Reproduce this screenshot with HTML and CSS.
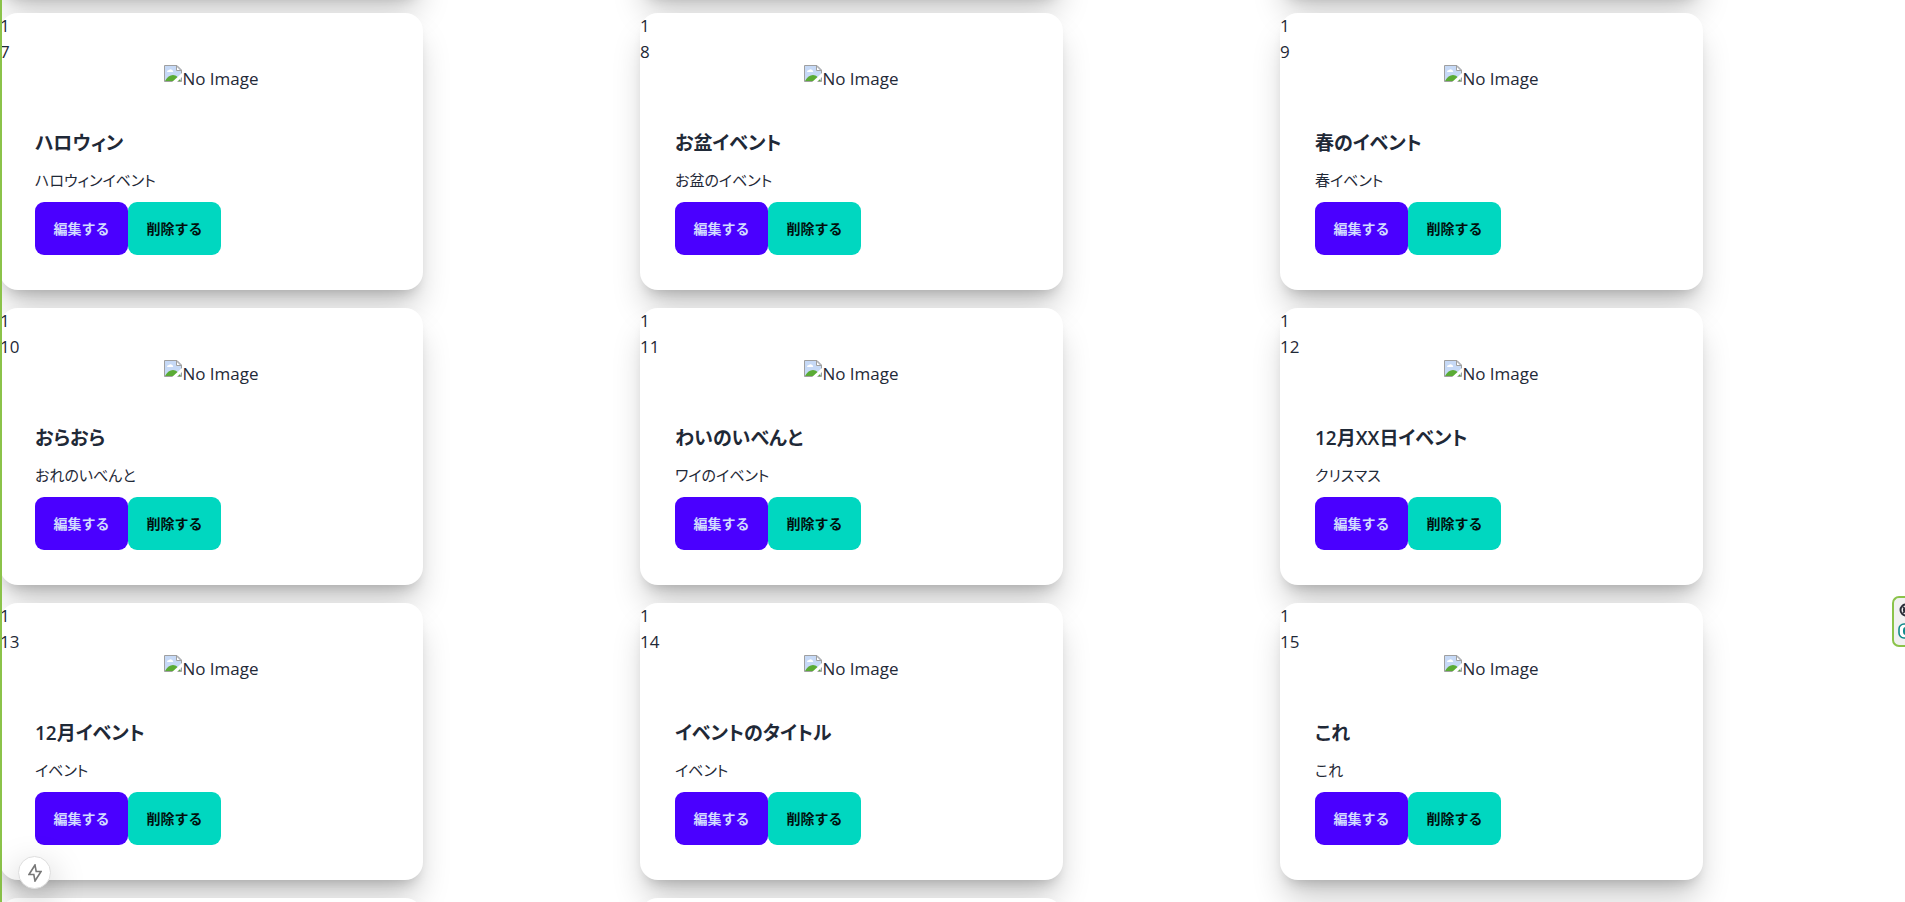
FILE: index.html
```html
<!DOCTYPE html>
<html lang="ja">
<head>
<meta charset="utf-8">
<meta name="viewport" content="width=device-width, initial-scale=1">
<title>イベント</title>
<link rel="stylesheet" href="styles.css">
</head>
<body>
<svg width="0" height="0" class="defs" aria-hidden="true">
  <symbol id="broken" viewBox="0 0 18 18">
    <path d="M.5 16.500V.5H13L17.500 5v11.500z" fill="#c6d9f6" stroke="#a0a0a0"/>
    <path d="M12.500 1v4.500H17z" fill="#fff" stroke="#a0a0a0"/>
    <path d="M3 7a2 2 0 0 1 2-2 2.500 2.500 0 0 1 4 1 1 1 0 0 1 0 1z" fill="#fff"/>
    <path d="M1 16c2-4 5-6 8-6 3 0 6 3 8 6z" fill="#5aab35"/>
    <path d="M7 18 18 8v4l-6 6z" fill="#fff"/>
  </symbol>
</svg>
<main class="page">
  <div class="grid">
    <article class="card"></article>
    <article class="card"></article>
    <article class="card"></article>

    <article class="card">
      <div class="num">1</div><div class="num">7</div>
      <figure class="figure"><svg class="broken"><use href="#broken"/></svg><span>No Image</span></figure>
      <div class="body"><h2 class="title">ハロウィン</h2><p class="text">ハロウィンイベント</p>
        <div class="actions"><button class="btn edit">編集する</button><button class="btn delete">削除する</button></div></div>
    </article>
    <article class="card">
      <div class="num">1</div><div class="num">8</div>
      <figure class="figure"><svg class="broken"><use href="#broken"/></svg><span>No Image</span></figure>
      <div class="body"><h2 class="title">お盆イベント</h2><p class="text">お盆のイベント</p>
        <div class="actions"><button class="btn edit">編集する</button><button class="btn delete">削除する</button></div></div>
    </article>
    <article class="card">
      <div class="num">1</div><div class="num">9</div>
      <figure class="figure"><svg class="broken"><use href="#broken"/></svg><span>No Image</span></figure>
      <div class="body"><h2 class="title">春のイベント</h2><p class="text">春イベント</p>
        <div class="actions"><button class="btn edit">編集する</button><button class="btn delete">削除する</button></div></div>
    </article>

    <article class="card">
      <div class="num">1</div><div class="num">10</div>
      <figure class="figure"><svg class="broken"><use href="#broken"/></svg><span>No Image</span></figure>
      <div class="body"><h2 class="title">おらおら</h2><p class="text">おれのいべんと</p>
        <div class="actions"><button class="btn edit">編集する</button><button class="btn delete">削除する</button></div></div>
    </article>
    <article class="card">
      <div class="num">1</div><div class="num">11</div>
      <figure class="figure"><svg class="broken"><use href="#broken"/></svg><span>No Image</span></figure>
      <div class="body"><h2 class="title">わいのいべんと</h2><p class="text">ワイのイベント</p>
        <div class="actions"><button class="btn edit">編集する</button><button class="btn delete">削除する</button></div></div>
    </article>
    <article class="card">
      <div class="num">1</div><div class="num">12</div>
      <figure class="figure"><svg class="broken"><use href="#broken"/></svg><span>No Image</span></figure>
      <div class="body"><h2 class="title">12月XX日イベント</h2><p class="text">クリスマス</p>
        <div class="actions"><button class="btn edit">編集する</button><button class="btn delete">削除する</button></div></div>
    </article>

    <article class="card">
      <div class="num">1</div><div class="num">13</div>
      <figure class="figure"><svg class="broken"><use href="#broken"/></svg><span>No Image</span></figure>
      <div class="body"><h2 class="title">12月イベント</h2><p class="text">イベント</p>
        <div class="actions"><button class="btn edit">編集する</button><button class="btn delete">削除する</button></div></div>
    </article>
    <article class="card">
      <div class="num">1</div><div class="num">14</div>
      <figure class="figure"><svg class="broken"><use href="#broken"/></svg><span>No Image</span></figure>
      <div class="body"><h2 class="title">イベントのタイトル</h2><p class="text">イベント</p>
        <div class="actions"><button class="btn edit">編集する</button><button class="btn delete">削除する</button></div></div>
    </article>
    <article class="card">
      <div class="num">1</div><div class="num">15</div>
      <figure class="figure"><svg class="broken"><use href="#broken"/></svg><span>No Image</span></figure>
      <div class="body"><h2 class="title">これ</h2><p class="text">これ</p>
        <div class="actions"><button class="btn edit">編集する</button><button class="btn delete">削除する</button></div></div>
    </article>

    <article class="card"></article>
    <article class="card"></article>
  </div>
</main>
<div class="edge"></div>
<button class="bolt" aria-label="Static route">
  <svg width="14" height="18" viewBox="0 0 14 18" fill="none" stroke="#777" stroke-width="1.600"><path d="M7 1 1 10.500h4.800L7 17l6-9.500H8.200z" stroke-linejoin="miter"/></svg>
</button>
<aside class="dock" aria-label="拡張機能">
  <svg width="24" height="44" viewBox="0 0 24 44" fill="none">
    <circle cx="12" cy="12" r="5.500" stroke="#2b2d38" stroke-width="2"/>
    <path d="M9 9l3 3-3 3M9 12h6" stroke="#2b2d38" stroke-width="1.800"/>
    <rect x="5" y="26" width="16" height="14" rx="5" fill="#fff" stroke="#128a8a" stroke-width="1.600"/>
    <rect x="9" y="29" width="9" height="8" rx="3" fill="#128a8a"/>
  </svg>
</aside>
</body>
</html>
```
FILE: styles.css
```css
* { box-sizing: border-box; }
body, h2, p, figure { margin: 0; }
body {
  background: #fff;
  color: #1f2937;
  font-family: "Open Sans", "Noto Sans CJK JP", sans-serif;
  font-size: 17px;
  line-height: 26px;
  font-feature-settings: "palt";
}
.defs { position: absolute; }
.page { height: 100vh; overflow: hidden; }
.grid {
  display: grid;
  grid-template-columns: repeat(3, minmax(0, 1fr));
  gap: 18px 15px;
  margin-top: -282px;
}
.card {
  display: flex;
  flex-direction: column;
  width: 100%;
  max-width: 423px;
  min-height: 277px;
  background: #fff;
  border-radius: 18px;
  box-shadow:
    0 22px 32px -5px rgba(0, 0, 0, .21),
    0 9px 13px -7px rgba(0, 0, 0, .2);
}
.figure {
  display: flex;
  justify-content: center;
  height: 27px;
  padding: 0 35px;
  line-height: 28px;
}
.broken { width: 18px; height: 18px; }
.body {
  display: flex;
  flex-direction: column;
  gap: 9px;
  padding: 36px 35px 35px;
}
.title { font-size: 19px; font-weight: 600; line-height: 30px; }
.text { font-size: 15px; }
.actions { display: flex; }
.btn {
  min-width: 93px;
  height: 53px;
  padding: 0 18px;
  border: 0;
  border-radius: 9px;
  font: inherit;
  font-size: 14px;
  font-weight: 600;
  font-feature-settings: normal;
}
.edit { background: #4a00ff; color: #d1dbff; }
.delete { background: #00d7c0; color: #00110e; }
.edge {
  position: fixed;
  inset: 0 auto 0 0;
  width: 2px;
  background: #8bc34a;
}
.bolt {
  position: fixed;
  left: 18px;
  bottom: 13px;
  display: grid;
  place-items: center;
  width: 33px;
  height: 33px;
  padding: 0;
  border: 1px solid #ddd;
  border-radius: 50%;
  background: #fff;
  box-shadow: 0 12px 35px rgba(0, 0, 0, .25);
}
.dock {
  position: fixed;
  top: 596px;
  right: 0;
  width: 13px;
  height: 51px;
  overflow: hidden;
  border: 2px solid #8bc34a;
  border-right: 0;
  border-radius: 7px 0 0 7px;
  background: #f1f1f1;
}
```
